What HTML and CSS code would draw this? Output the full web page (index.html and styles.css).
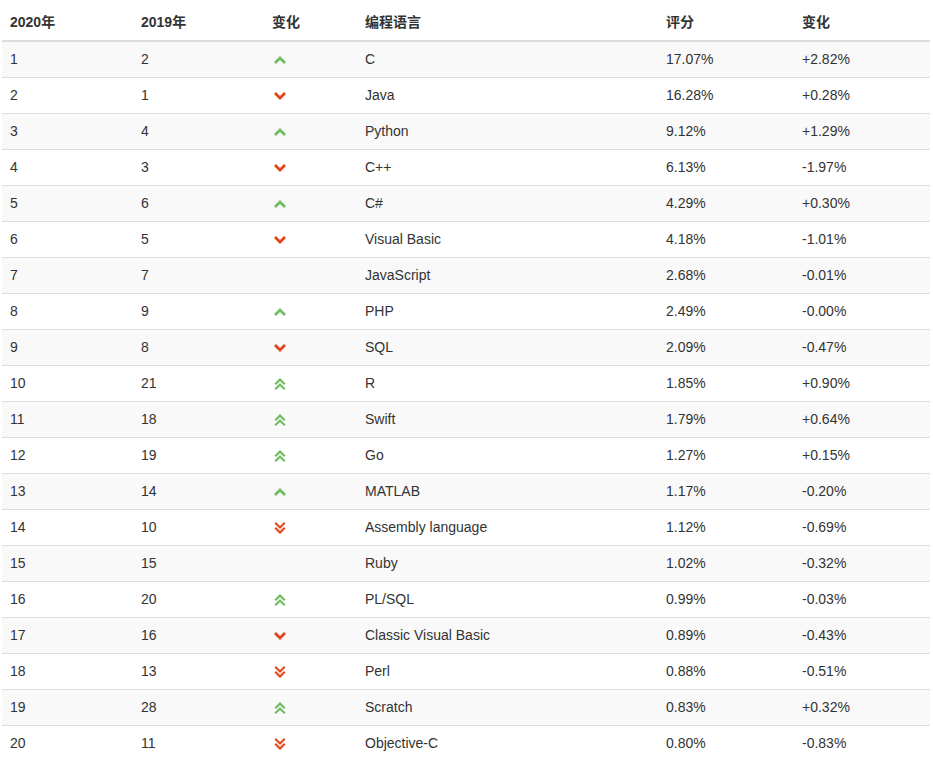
FILE: index.html
```html
<!DOCTYPE html>
<html lang="zh">
<head>
<meta charset="utf-8">
<link rel="stylesheet" href="styles.css">
<title>TIOBE</title>
</head>
<body>
<div class="wrap">
<table class="rank">
<colgroup>
<col class="c1"><col class="c2"><col class="c3"><col class="c4"><col class="c5"><col class="c6">
</colgroup>
<thead>
<tr><th>2020年</th><th>2019年</th><th>变化</th><th>编程语言</th><th>评分</th><th>变化</th></tr>
</thead>
<tbody>
<tr><td>1</td><td>2</td><td><svg class="ic up" viewBox="0 0 12 8" width="12" height="8"><path d="M0 6 L6 0 L12 6 L10 8 L6 4 L2 8 Z"/></svg></td><td>C</td><td>17.07%</td><td>+2.82%</td></tr>
<tr><td>2</td><td>1</td><td><svg class="ic down" viewBox="0 0 12 8" width="12" height="8"><path d="M0 2 L6 8 L12 2 L10 0 L6 4 L2 0 Z"/></svg></td><td>Java</td><td>16.28%</td><td>+0.28%</td></tr>
<tr><td>3</td><td>4</td><td><svg class="ic up" viewBox="0 0 12 8" width="12" height="8"><path d="M0 6 L6 0 L12 6 L10 8 L6 4 L2 8 Z"/></svg></td><td>Python</td><td>9.12%</td><td>+1.29%</td></tr>
<tr><td>4</td><td>3</td><td><svg class="ic down" viewBox="0 0 12 8" width="12" height="8"><path d="M0 2 L6 8 L12 2 L10 0 L6 4 L2 0 Z"/></svg></td><td>C++</td><td>6.13%</td><td>-1.97%</td></tr>
<tr><td>5</td><td>6</td><td><svg class="ic up" viewBox="0 0 12 8" width="12" height="8"><path d="M0 6 L6 0 L12 6 L10 8 L6 4 L2 8 Z"/></svg></td><td>C#</td><td>4.29%</td><td>+0.30%</td></tr>
<tr><td>6</td><td>5</td><td><svg class="ic down" viewBox="0 0 12 8" width="12" height="8"><path d="M0 2 L6 8 L12 2 L10 0 L6 4 L2 0 Z"/></svg></td><td>Visual Basic</td><td>4.18%</td><td>-1.01%</td></tr>
<tr><td>7</td><td>7</td><td></td><td>JavaScript</td><td>2.68%</td><td>-0.01%</td></tr>
<tr><td>8</td><td>9</td><td><svg class="ic up" viewBox="0 0 12 8" width="12" height="8"><path d="M0 6 L6 0 L12 6 L10 8 L6 4 L2 8 Z"/></svg></td><td>PHP</td><td>2.49%</td><td>-0.00%</td></tr>
<tr><td>9</td><td>8</td><td><svg class="ic down" viewBox="0 0 12 8" width="12" height="8"><path d="M0 2 L6 8 L12 2 L10 0 L6 4 L2 0 Z"/></svg></td><td>SQL</td><td>2.09%</td><td>-0.47%</td></tr>
<tr><td>10</td><td>21</td><td><svg class="ic up" viewBox="0 0 12 12" width="12" height="12"><path d="M0.5 5.5 L6 0 L11.5 5.5 L10 7 L6 3 L2 7 Z M0.5 10.5 L6 5 L11.5 10.5 L10 12 L6 8 L2 12 Z"/></svg></td><td>R</td><td>1.85%</td><td>+0.90%</td></tr>
<tr><td>11</td><td>18</td><td><svg class="ic up" viewBox="0 0 12 12" width="12" height="12"><path d="M0.5 5.5 L6 0 L11.5 5.5 L10 7 L6 3 L2 7 Z M0.5 10.5 L6 5 L11.5 10.5 L10 12 L6 8 L2 12 Z"/></svg></td><td>Swift</td><td>1.79%</td><td>+0.64%</td></tr>
<tr><td>12</td><td>19</td><td><svg class="ic up" viewBox="0 0 12 12" width="12" height="12"><path d="M0.5 5.5 L6 0 L11.5 5.5 L10 7 L6 3 L2 7 Z M0.5 10.5 L6 5 L11.5 10.5 L10 12 L6 8 L2 12 Z"/></svg></td><td>Go</td><td>1.27%</td><td>+0.15%</td></tr>
<tr><td>13</td><td>14</td><td><svg class="ic up" viewBox="0 0 12 8" width="12" height="8"><path d="M0 6 L6 0 L12 6 L10 8 L6 4 L2 8 Z"/></svg></td><td>MATLAB</td><td>1.17%</td><td>-0.20%</td></tr>
<tr><td>14</td><td>10</td><td><svg class="ic down" viewBox="0 0 12 12" width="12" height="12"><path d="M0.5 1.5 L6 7 L11.5 1.5 L10 0 L6 4 L2 0 Z M0.5 6.5 L6 12 L11.5 6.5 L10 5 L6 9 L2 5 Z"/></svg></td><td>Assembly language</td><td>1.12%</td><td>-0.69%</td></tr>
<tr><td>15</td><td>15</td><td></td><td>Ruby</td><td>1.02%</td><td>-0.32%</td></tr>
<tr><td>16</td><td>20</td><td><svg class="ic up" viewBox="0 0 12 12" width="12" height="12"><path d="M0.5 5.5 L6 0 L11.5 5.5 L10 7 L6 3 L2 7 Z M0.5 10.5 L6 5 L11.5 10.5 L10 12 L6 8 L2 12 Z"/></svg></td><td>PL/SQL</td><td>0.99%</td><td>-0.03%</td></tr>
<tr><td>17</td><td>16</td><td><svg class="ic down" viewBox="0 0 12 8" width="12" height="8"><path d="M0 2 L6 8 L12 2 L10 0 L6 4 L2 0 Z"/></svg></td><td>Classic Visual Basic</td><td>0.89%</td><td>-0.43%</td></tr>
<tr><td>18</td><td>13</td><td><svg class="ic down" viewBox="0 0 12 12" width="12" height="12"><path d="M0.5 1.5 L6 7 L11.5 1.5 L10 0 L6 4 L2 0 Z M0.5 6.5 L6 12 L11.5 6.5 L10 5 L6 9 L2 5 Z"/></svg></td><td>Perl</td><td>0.88%</td><td>-0.51%</td></tr>
<tr><td>19</td><td>28</td><td><svg class="ic up" viewBox="0 0 12 12" width="12" height="12"><path d="M0.5 5.5 L6 0 L11.5 5.5 L10 7 L6 3 L2 7 Z M0.5 10.5 L6 5 L11.5 10.5 L10 12 L6 8 L2 12 Z"/></svg></td><td>Scratch</td><td>0.83%</td><td>+0.32%</td></tr>
<tr><td>20</td><td>11</td><td><svg class="ic down" viewBox="0 0 12 12" width="12" height="12"><path d="M0.5 1.5 L6 7 L11.5 1.5 L10 0 L6 4 L2 0 Z M0.5 6.5 L6 12 L11.5 6.5 L10 5 L6 9 L2 5 Z"/></svg></td><td>Objective-C</td><td>0.80%</td><td>-0.83%</td></tr>
</tbody>
</table>
</div>
</body>
</html>
```
FILE: styles.css
```css
html, body {
  margin: 0;
  padding: 0;
  background: #fff;
}
body {
  font-family: "Liberation Sans", Arial, "Noto Sans CJK SC", sans-serif;
  font-size: 14px;
  color: #333;
}
.wrap {
  padding: 5px 3px 0 2px;
}
.rank {
  width: 928px;
  table-layout: fixed;
  border-collapse: collapse;
  border-spacing: 0;
}
.c1 { width: 131px; }
.c2 { width: 131px; }
.c3 { width: 93px; }
.c4 { width: 301px; }
.c5 { width: 136px; }
.c6 { width: 136px; }
.rank th,
.rank td {
  padding: 8px;
  line-height: 19px;
  text-align: left;
  vertical-align: middle;
}
.rank th {
  font-weight: bold;
  border-bottom: 2px solid #ddd;
}
.rank td {
  border-top: 1px solid #ddd;
}
.rank tbody tr:nth-child(odd) {
  background: #f9f9f9;
}
.ic {
  display: block;
  margin-left: 2px;
}
.up { fill: #6fbb5f; }
.down { fill: #e5461b; }
```
